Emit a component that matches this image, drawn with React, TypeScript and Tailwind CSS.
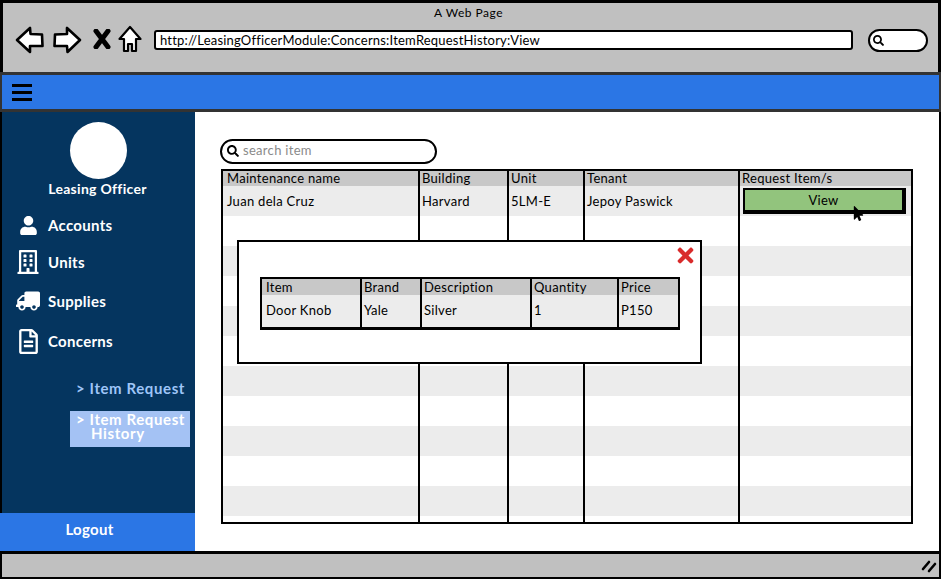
import { FaUser, FaRegBuilding, FaTruck, FaRegFileAlt, FaTimes, FaSearch, FaMousePointer } from "react-icons/fa";

const font = "font-['Lato','Noto_Sans',sans-serif]";

function NavIcons() {
  return (
    <div className="flex items-center">
      <svg width="30" height="28" viewBox="0 0 30 28" className="ml-[15px]">
        <path d="M2 14 L15 2 L15.5 8 L27 8.5 L27.5 20 L15 20 L15 26 Z" fill="#fff" stroke="#000" strokeWidth="2.6" strokeLinejoin="round" />
      </svg>
      <svg width="30" height="28" viewBox="0 0 30 28" className="ml-[7px]">
        <path d="M28 14 L15 2 L15 8 L3 8.5 L2.5 20 L15 20 L15.5 26 Z" fill="#fff" stroke="#000" strokeWidth="2.6" strokeLinejoin="round" />
      </svg>
      <svg width="18" height="20" viewBox="0 0 18 20" className="ml-[11px] -mt-[3px]">
        <path d="M3 2 L15 18 M15 2 L3 18" stroke="#000" strokeWidth="5" strokeLinecap="round" fill="none" />
      </svg>
      <svg width="24" height="28" viewBox="0 0 24 28" className="ml-[7px] -mt-[3px]">
        <path d="M12 2 L22.5 14 L18 14 L18 26 L14 26 L14 19 L10 19 L10 26 L6 26 L6 14 L1.5 14 Z" fill="#fff" stroke="#000" strokeWidth="2.2" strokeLinejoin="round" />
      </svg>
    </div>
  );
}

function NavItem({ icon, label, className }: { icon: React.ReactNode; label: string; className: string }) {
  return (
    <div className={`flex items-center ${className}`}>
      <div className="w-[46px] flex justify-center pl-[6px] shrink-0">{icon}</div>
      <span className="text-[15px] font-bold text-white leading-none">{label}</span>
    </div>
  );
}

const cols = "grid grid-cols-[197px_89px_76px_155px_1fr]";
const headers = ["Maintenance name", "Building", "Unit", "Tenant", "Request Item/s"];
const rowIdx = [0, 1, 2, 3, 4, 5, 6, 7, 8, 9, 10];

function MainTable() {
  return (
    <div className="mt-[5px] ml-[26px] w-[692px] border-2 border-black bg-white relative">
      <div className={`${cols} h-[15px] bg-[#c8c8c8] text-[13px] leading-[15px] text-black`}>
        {headers.map((h, i) => (
          <div key={h} className={`${i < 4 ? "border-r-2 border-black" : ""} ${i === 0 ? "pl-[4px]" : "pl-[2px]"} whitespace-nowrap`}>
            {h}
          </div>
        ))}
      </div>
      {rowIdx.map((r) => (
        <div key={r} className={`${cols} h-[30px] ${r % 2 === 0 ? "bg-[#ececec]" : "bg-white"} text-[13px] text-black`}>
          {[0, 1, 2, 3, 4].map((c) => (
            <div key={c} className={`${c < 4 ? "border-r-2 border-black" : ""} ${c === 0 ? "pl-[4px]" : "pl-[2px]"} leading-[30px] whitespace-nowrap`}>
              {r === 0 && c === 0 && "Juan dela Cruz"}
              {r === 0 && c === 1 && "Harvard"}
              {r === 0 && c === 2 && "5LM-E"}
              {r === 0 && c === 3 && "Jepoy Paswick"}
              {r === 0 && c === 4 && (
                <div className="mt-[2px] ml-[1px] h-[26px] w-[163px] border-2 border-black border-b-[4px] border-r-[4px] bg-[#92c47d] text-center leading-[21px]">
                  View
                </div>
              )}
            </div>
          ))}
        </div>
      ))}
      <div className={`${cols} h-[6px]`}>
        {[0, 1, 2, 3].map((c) => (
          <div key={c} className="border-r-2 border-black" />
        ))}
      </div>
    </div>
  );
}

const modalCols = "grid grid-cols-[100px_60px_110px_87px_1fr]";
const modalHead = ["Item", "Brand", "Description", "Quantity", "Price"];
const modalRow = ["Door Knob", "Yale", "Silver", "1", "P150"];

function Modal() {
  return (
    <div className="absolute left-[237px] top-[240px] w-[465px] h-[124px] border-2 border-black bg-white">
      <FaTimes className="absolute right-[3px] top-[2px] text-[#d92b2b] text-[23px]" />
      <div className="mt-[35px] ml-[21px] w-[420px] border-2 border-b-[3px] border-black">
        <div className={`${modalCols} h-[16px] bg-[#c8c8c8] text-[13px] leading-[16px]`}>
          {modalHead.map((h, i) => (
            <div key={h} className={`${i < 4 ? "border-r-2 border-black" : ""} ${i === 0 ? "pl-[4px]" : "pl-[2px]"}`}>{h}</div>
          ))}
        </div>
        <div className={`${modalCols} h-[32px] bg-[#ececec] text-[13px] leading-[30px]`}>
          {modalRow.map((h, i) => (
            <div key={h} className={`${i < 4 ? "border-r-2 border-black" : ""} ${i === 0 ? "pl-[4px]" : "pl-[2px]"}`}>{h}</div>
          ))}
        </div>
      </div>
    </div>
  );
}

export default function App() {
  return (
    <div className={`relative w-[941px] h-[579px] overflow-hidden bg-white flex flex-col tracking-[0.3px] ${font}`}>
      {/* Browser chrome */}
      <div className="h-[72px] bg-[#c0c0c0] border-[3px] border-b-0 border-black relative shrink-0">
        <div className="text-center text-[12px] leading-none pt-[4px] pr-[4px] tracking-[0.5px] text-black">A Web Page</div>
        <div className="flex items-center mt-[7px] -ml-[3px]">
          <NavIcons />
          <div className="ml-[12px] w-[699px] h-[20px] bg-white border-2 border-black rounded-[3px] flex items-center pl-[4px] text-[13px] tracking-[0.2px] leading-none text-black whitespace-nowrap">
            http://LeasingOfficerModule:Concerns:ItemRequestHistory:View
          </div>
          <div className="ml-[15px] w-[60px] h-[23px] bg-white border-2 border-black rounded-full flex items-center pl-[3px]">
            <FaSearch className="text-[11px] text-black" />
          </div>
        </div>
      </div>
      {/* Blue bar */}
      <div className="h-[40px] shrink-0 bg-[#2b76e5] border-y-[3px] border-x-2 border-[#333333] flex items-center pl-[10px]">
        <div className="w-[20px] flex flex-col gap-[4px]">
          <div className="h-[3px] bg-black" />
          <div className="h-[3px] bg-black" />
          <div className="h-[3px] bg-black" />
        </div>
      </div>
      {/* Body */}
      <div className="flex-1 flex min-h-0">
        <aside className="w-[195px] shrink-0 bg-[#05355f] border-l-2 border-black flex flex-col">
          <div className="mt-[10px] mx-auto w-[57px] h-[57px] rounded-full bg-white" />
          <div className="text-center text-white font-bold text-[14px] leading-none mt-[3px] pr-[2px]">Leasing Officer</div>
          <NavItem className="mt-[16px] h-[26px]" icon={<FaUser className="text-white text-[19px]" />} label="Accounts" />
          <NavItem className="mt-[11px] h-[26px]" icon={<FaRegBuilding className="text-white text-[24px]" />} label="Units" />
          <NavItem className="mt-[13px] h-[26px]" icon={<FaTruck className="text-white text-[24px] -scale-x-100" />} label="Supplies" />
          <NavItem className="mt-[14px] h-[26px]" icon={<FaRegFileAlt className="text-white text-[25px]" />} label="Concerns" />
          <div className="mt-[27px] ml-[74px] text-[15px] font-bold tracking-[0.6px] text-[#9fc5f8] leading-none whitespace-nowrap">&gt; Item Request</div>
          <div className="mt-[15px] ml-[68px] w-[120px] h-[36px] bg-[#a4c2f4] text-white text-[15px] font-bold tracking-[0.6px] leading-[14px] pl-[21px] -indent-[15px] pt-[1px]">
            &gt; Item Request History
          </div>
          <div className="mt-auto -ml-[2px] h-[38px] w-[195px] bg-[#2b76e5] text-white text-[15px] font-bold flex items-center justify-center pr-[16px] pb-[5px]">
            Logout
          </div>
        </aside>
        <main className="flex-1 bg-white pt-[27px] border-r-2 border-black">
          <div className="ml-[25px] w-[217px] h-[25px] border-2 border-black rounded-full flex items-center pl-[5px] gap-[4px] text-[13px] leading-none pb-[3px] text-[#8a8a8a]">
            <FaSearch className="text-[12px] text-black mt-[2px]" />
            search item
          </div>
          <MainTable />
        </main>
      </div>
      {/* Status bar */}
      <div className="h-[28px] shrink-0 bg-[#c0c0c0] border-2 border-t-[3px] border-black flex items-center justify-end pr-[2px]">
        <svg width="16" height="14" viewBox="0 0 16 14">
          <path d="M2 10 L8 3 M8 12 L14 5" stroke="#000" strokeWidth="2.6" strokeLinecap="round" />
        </svg>
      </div>
      <Modal />
      <FaMousePointer className="absolute left-[851px] top-[206px] text-[15px] text-black" />
    </div>
  );
}
